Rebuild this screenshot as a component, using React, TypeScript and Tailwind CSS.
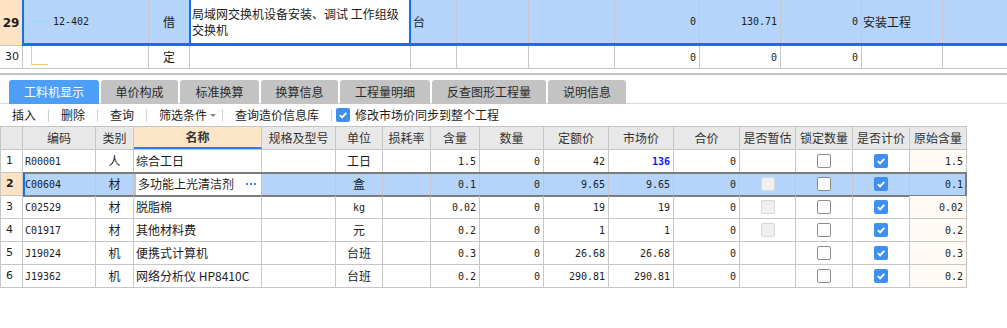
import React from "react";

const cn = "font-['Noto_Sans_CJK_SC','Noto_Sans',sans-serif]";
const mono = "font-['DejaVu_Sans_Mono',monospace] text-[10px]";

const lowCols = [23, 73, 38, 128, 74, 47, 48, 49, 64, 65, 65, 66, 56, 57, 57, 57];
const heads = ["", "编码", "类别", "名称", "规格及型号", "单位", "损耗率", "含量", "数量", "定额价", "市场价", "合价", "是否暂估", "锁定数量", "是否计价", "原始含量"];

type Row = {
  n: string;
  code: string;
  kind: string;
  name: string;
  unit: string;
  qty: string;
  price: string;
  market: string;
  est: "none" | "off";
  orig: string;
};

const rows: Row[] = [
  { n: "1", code: "R00001", kind: "人", name: "综合工日", unit: "工日", qty: "1.5", price: "42", market: "136", est: "none", orig: "1.5" },
  { n: "2", code: "C00604", kind: "材", name: "多功能上光清洁剂", unit: "盒", qty: "0.1", price: "9.65", market: "9.65", est: "off", orig: "0.1" },
  { n: "3", code: "C02529", kind: "材", name: "脱脂棉", unit: "kg", qty: "0.02", price: "19", market: "19", est: "off", orig: "0.02" },
  { n: "4", code: "C01917", kind: "材", name: "其他材料费", unit: "元", qty: "0.2", price: "1", market: "1", est: "off", orig: "0.2" },
  { n: "5", code: "J19024", kind: "机", name: "便携式计算机", unit: "台班", qty: "0.3", price: "26.68", market: "26.68", est: "none", orig: "0.3" },
  { n: "6", code: "J19362", kind: "机", name: "网络分析仪 HP8410C", unit: "台班", qty: "0.2", price: "290.81", market: "290.81", est: "none", orig: "0.2" },
];

function Check() {
  return (
    <span className="w-[14px] h-[14px] rounded-[2px] bg-[#3f8ff0] flex items-center justify-center">
      <svg width="10" height="10" viewBox="0 0 10 10">
        <path d="M1.8 5.2 L4.1 7.4 L8.3 2.8" stroke="#fff" strokeWidth="1.8" fill="none" />
      </svg>
    </span>
  );
}

function Box({ disabled }: { disabled?: boolean }) {
  return disabled ? (
    <span className="w-[14px] h-[14px] rounded-[2px] bg-[#f0f0f0] border border-[#d8d8d8]" />
  ) : (
    <span className="w-[14px] h-[14px] rounded-[2px] bg-white border border-[#8c8c8c]" />
  );
}

function Cell({ w, className = "", children }: { w: number; className?: string; children?: React.ReactNode }) {
  return (
    <div
      className={"h-full shrink-0 border-r border-[#c6c6c6] flex items-center overflow-hidden whitespace-nowrap " + className}
      style={{ width: w }}
    >
      {children}
    </div>
  );
}

function TopGrid() {
  return (
    <div className="h-[69px]">
      <div className="flex h-[46px]">
        <div className="w-[22px] h-full bg-[#fde3c3] border-b border-[#c6c6c6] flex items-center justify-center font-bold text-[12px] font-['DejaVu_Sans',sans-serif]">
          29
        </div>
        <div className="flex-1 flex h-full bg-[#b4d4fb] border-l-2 border-b-[3px] border-[#1470f2]">
          <Cell w={125} className="relative">
            <span className="absolute left-[7px] top-0 h-full w-px bg-[#f8c57c]" />
            <span className="absolute left-[7px] top-[21px] w-[17px] h-px bg-[#f8c57c]" />
            <span className={mono + " pl-[29px]"}>12-402</span>
          </Cell>
          <div className="w-[40px] h-full shrink-0 flex items-center justify-center">借</div>
          <div className="w-[222px] h-full shrink-0 bg-white border-x-2 border-[#1470f2] pl-[1px] flex items-center leading-[16px] whitespace-normal">
            局域网交换机设备安装、调试 工作组级交换机
          </div>
          <Cell w={46} className="pl-[2px]">台</Cell>
          <Cell w={72} />
          <Cell w={86} />
          <Cell w={85} className={"justify-end pr-[3px] " + mono}>0</Cell>
          <Cell w={81} className={"justify-end pr-[3px] " + mono}>130.71</Cell>
          <Cell w={81} className={"justify-end pr-[3px] " + mono}>0</Cell>
          <Cell w={81} className="pl-[1px]">安装工程</Cell>
          <div className="flex-1" />
        </div>
      </div>
      <div className="flex h-[23px] border-b border-[#c6c6c6]">
        <Cell w={23} className={"pl-[5px] text-[11px] font-['DejaVu_Sans',sans-serif]"}>30</Cell>
        <Cell w={126} className="relative">
          <span className="absolute left-[8px] top-0 h-[19px] w-px bg-[#f8c57c]" />
          <span className="absolute left-[8px] top-[18px] w-[17px] h-px bg-[#f8c57c]" />
        </Cell>
        <Cell w={41} className="justify-center">定</Cell>
        <Cell w={221} />
        <Cell w={46} />
        <Cell w={72} />
        <Cell w={86} />
        <Cell w={85} className={"justify-end pr-[3px] " + mono}>0</Cell>
        <Cell w={81} className={"justify-end pr-[3px] " + mono}>0</Cell>
        <Cell w={81} className={"justify-end pr-[3px] " + mono}>0</Cell>
        <Cell w={81} />
        <div className="flex-1" />
      </div>
    </div>
  );
}

const tabs = ["工料机显示", "单价构成", "标准换算", "换算信息", "工程量明细", "反查图形工程量", "说明信息"];
const tabW = [90, 77, 79, 77, 90, 114, 78];

function Tabs() {
  return (
    <div className="h-[29px] pt-[5px] pl-[9px] flex gap-[2px] border-b border-[#dadada]">
      {tabs.map((t, i) => (
        <div
          key={t}
          className={
            "h-[24px] rounded-t-[3px] flex items-center justify-center text-[12px] " +
            (i === 0 ? "bg-[#4c9ef6] text-white" : "bg-[#c3c3c3] text-[#2a2a2a]")
          }
          style={{ width: tabW[i] }}
        >
          {t}
        </div>
      ))}
    </div>
  );
}

function Sep() {
  return <span className="w-px h-[13px] bg-[#d2d2d2] mx-[12px]" />;
}

function Toolbar() {
  return (
    <div className="h-[22px] flex items-center pl-[12px] text-[12px]">
      <span>插入</span>
      <Sep />
      <span>删除</span>
      <Sep />
      <span>查询</span>
      <Sep />
      <span>筛选条件</span>
      <span className="ml-[3px] w-0 h-0 border-x-[3px] border-x-transparent border-t-[3px] border-t-[#888]" />
      <span className="w-px h-[13px] bg-[#d2d2d2] ml-[6px] mr-[12px]" />
      <span>查询造价信息库</span>
      <span className="w-px h-[13px] bg-[#d2d2d2] ml-[12px] mr-[4px]" />
      <Check />
      <span className="ml-[5px]">修改市场价同步到整个工程</span>
    </div>
  );
}

function Dots() {
  return (
    <span className="flex gap-[2px] shrink-0">
      <span className="w-[2px] h-[2px] bg-[#3b7fd8]" />
      <span className="w-[2px] h-[2px] bg-[#3b7fd8]" />
      <span className="w-[2px] h-[2px] bg-[#3b7fd8]" />
    </span>
  );
}

function LowGrid() {
  return (
    <div className="border-t border-[#c6c6c6] w-[967px] border-l">
      <div className="flex h-[23px] border-b border-[#c6c6c6] bg-[#e8e8e8]">
        {heads.map((h, i) => (
          <Cell
            key={i}
            w={i === 0 ? 22 : lowCols[i]}
            className={
              "justify-center text-[#333] " +
              (i === 3 ? "bg-[#fde6c8] font-bold text-[#111] border-b-2 border-b-[#2f7cf0]" : "")
            }
          >
            {h}
          </Cell>
        ))}
      </div>
      {rows.map((r) => {
        const sel = r.n === "2";
        const num = "justify-end pr-[3px] " + mono;
        return (
          <div key={r.n} className={"relative flex h-[23px] border-b border-[#c6c6c6] " + (sel ? "bg-[#b4d4fb]" : "")}>
            <Cell
              w={22}
              className={
                "pl-[5px] text-[11px] font-['DejaVu_Sans',sans-serif] " +
                (sel ? "bg-[#fde3c3] font-bold" : "bg-white")
              }
            >
              {r.n}
            </Cell>
            <Cell w={73} className={"pl-[2px] " + mono}>{r.code}</Cell>
            <Cell w={38} className="justify-center">{r.kind}</Cell>
            <Cell w={128} className={"pl-[2px] " + (sel ? "bg-white border-x-2 border-[#7c7c7c] justify-between pr-[5px]" : "")}>
              <span>{r.name}</span>
              {sel && <Dots />}
            </Cell>
            <Cell w={74} />
            <Cell w={47} className={"justify-center " + (r.unit === "kg" ? mono : "")}>{r.unit}</Cell>
            <Cell w={48} />
            <Cell w={49} className={num}>{r.qty}</Cell>
            <Cell w={64} className={num}>0</Cell>
            <Cell w={65} className={num}>{r.price}</Cell>
            <Cell w={65} className={num + (r.n === "1" ? " text-[#0a1bf0] font-bold" : "")}>{r.market}</Cell>
            <Cell w={66} className={num}>0</Cell>
            <Cell w={56} className="justify-center">{r.est === "off" && <Box disabled />}</Cell>
            <Cell w={57} className="justify-center"><Box /></Cell>
            <Cell w={57} className="justify-center"><Check /></Cell>
            <Cell w={57} className={num + (sel ? "" : " bg-[#fffaf4]")}>{r.orig}</Cell>
            {sel && (
              <div className="absolute left-[22px] right-0 -top-[1px] h-[25px] border-2 border-[#7c7c7c] border-l-[#1470f2] pointer-events-none" />
            )}
          </div>
        );
      })}
    </div>
  );
}

export default function App() {
  return (
    <div className={"w-[1007px] h-[328px] bg-white overflow-hidden text-[12px] text-[#1c1c1c] " + cn}>
      <TopGrid />
      <div className="h-[4px]" />
      <div className="h-[2px] bg-[#c4c4c4]" />
      <Tabs />
      <Toolbar />
      <LowGrid />
    </div>
  );
}
